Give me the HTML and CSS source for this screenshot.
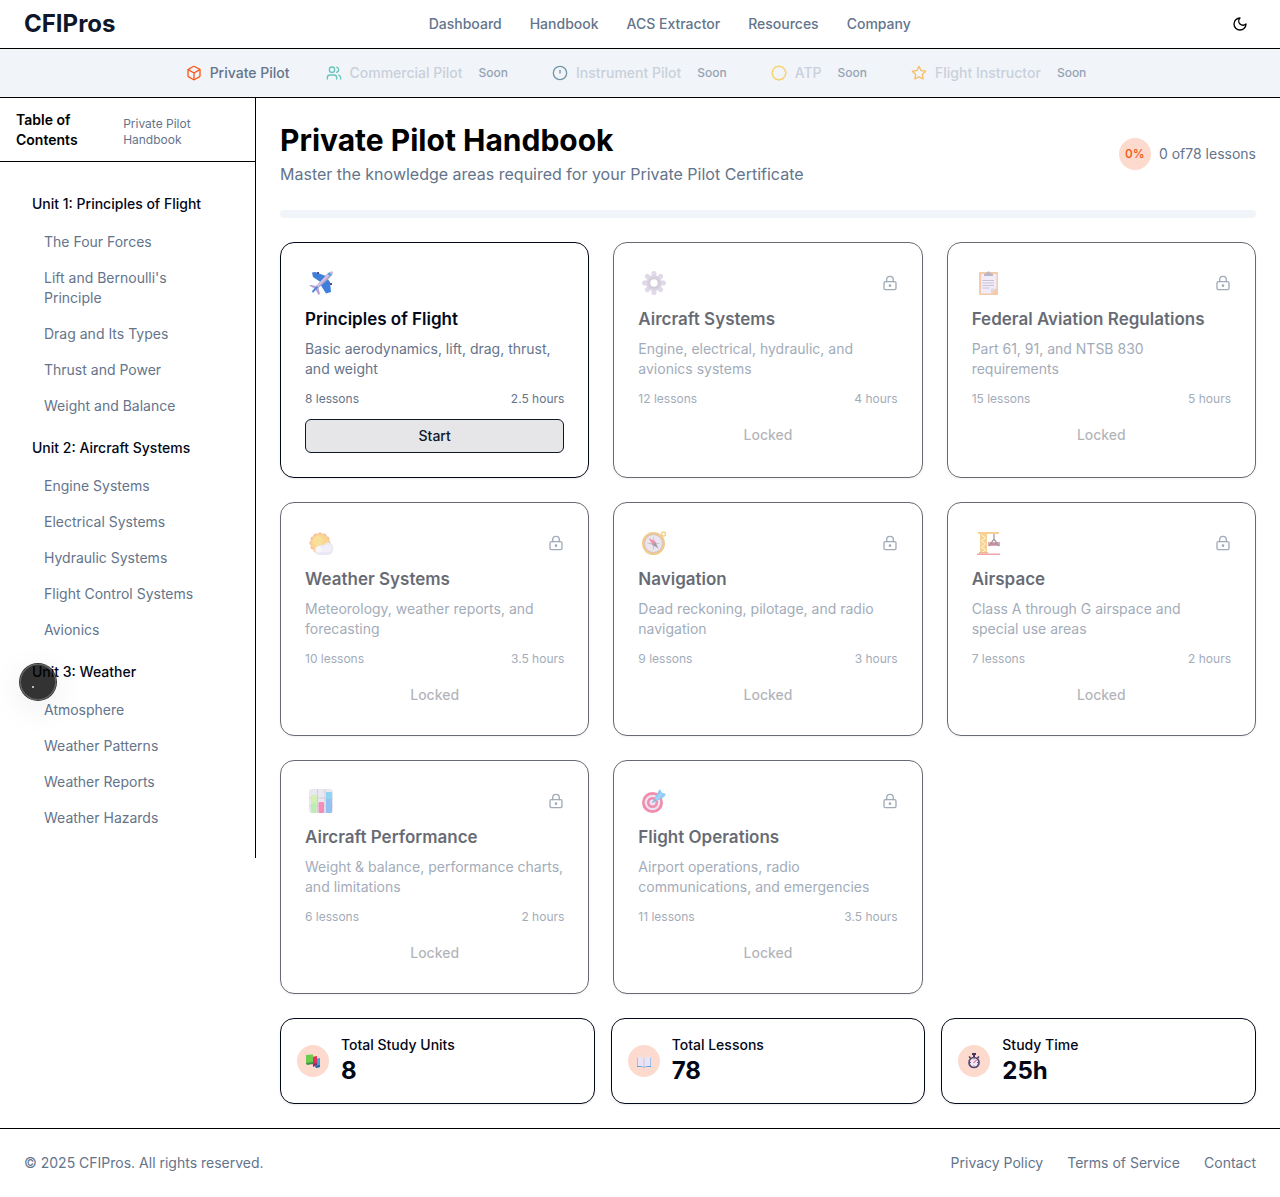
FILE: index.html
```html
<!DOCTYPE html>
<html lang="en">
<head>
<meta charset="utf-8">
<meta name="viewport" content="width=device-width, initial-scale=1">
<title>Private Pilot Handbook - CFIPros</title>
<link rel="stylesheet" href="styles.css">
</head>
<body>
<svg class="sprite" aria-hidden="true">
  <symbol id="lock" viewBox="0 0 24 24"><circle cx="12" cy="16" r="1"/><rect x="3" y="10" width="18" height="12" rx="2"/><path d="M7 10V7a5 5 0 0 1 10 0v3"/></symbol>
</svg>

<header class="topbar">
  <a class="brand" href="#">CFIPros</a>
  <nav class="main-nav" aria-label="Main">
    <a href="#">Dashboard</a>
    <a href="#">Handbook</a>
    <a href="#">ACS Extractor</a>
    <a href="#">Resources</a>
    <a href="#">Company</a>
  </nav>
  <button class="theme-toggle" type="button" aria-label="Toggle theme">
    <svg class="icon" viewBox="0 0 24 24"><path d="M12 3a6 6 0 0 0 9 9 9 9 0 1 1-9-9Z"/></svg>
  </button>
</header>

<nav class="tracks" aria-label="Certificates">
  <a class="track active" href="#">
    <svg class="icon orange" viewBox="0 0 24 24"><path d="M21 16V8a2 2 0 0 0-1-1.73l-7-4a2 2 0 0 0-2 0l-7 4A2 2 0 0 0 3 8v8a2 2 0 0 0 1 1.73l7 4a2 2 0 0 0 2 0l7-4A2 2 0 0 0 21 16z"/><path d="M3.3 7 12 12l8.7-5M12 22V12"/></svg>
    <span>Private Pilot</span>
  </a>
  <a class="track" href="#">
    <svg class="icon teal" viewBox="0 0 24 24"><path d="M16 21v-2a4 4 0 0 0-4-4H6a4 4 0 0 0-4 4v2"/><circle cx="9" cy="7" r="4"/><path d="M22 21v-2a4 4 0 0 0-3-3.87M16 3.13a4 4 0 0 1 0 7.75"/></svg>
    <span>Commercial Pilot</span><span class="soon">Soon</span>
  </a>
  <a class="track" href="#">
    <svg class="icon slate" viewBox="0 0 24 24"><circle cx="12" cy="12" r="10"/><path d="M12 8v4"/></svg>
    <span>Instrument Pilot</span><span class="soon">Soon</span>
  </a>
  <a class="track" href="#">
    <svg class="icon yellow" viewBox="0 0 24 24"><path d="M20.980 14.410A2.600 2.600 0 0 1 18.580 18.580 2.600 2.600 0 0 1 14.410 20.980 2.600 2.600 0 0 1 9.590 20.980 2.600 2.600 0 0 1 5.420 18.580 2.600 2.600 0 0 1 3.020 14.410 2.600 2.600 0 0 1 3.020 9.590 2.600 2.600 0 0 1 5.420 5.420 2.600 2.600 0 0 1 9.590 3.020 2.600 2.600 0 0 1 14.410 3.020 2.600 2.600 0 0 1 18.580 5.420 2.600 2.600 0 0 1 20.980 9.590 2.600 2.600 0 0 1 20.980 14.410Z"/></svg>
    <span>ATP</span><span class="soon">Soon</span>
  </a>
  <a class="track" href="#">
    <svg class="icon amber" viewBox="0 0 24 24"><path d="m12 2 3.09 6.26L22 9.27l-5 4.87 1.18 6.88L12 17.77l-6.18 3.25L7 14.14 2 9.27l6.91-1.01L12 2z"/></svg>
    <span>Flight Instructor</span><span class="soon">Soon</span>
  </a>
</nav>

<div class="layout">
  <aside class="sidebar">
    <div class="sidebar-head">
      <h2>Table of Contents</h2>
      <a href="#">Private Pilot Handbook</a>
    </div>
    <nav class="toc" aria-label="Table of contents">
      <section>
        <h3>Unit 1: Principles of Flight</h3>
        <ul>
          <li><a href="#">The Four Forces</a></li>
          <li><a href="#">Lift and Bernoulli's Principle</a></li>
          <li><a href="#">Drag and Its Types</a></li>
          <li><a href="#">Thrust and Power</a></li>
          <li><a href="#">Weight and Balance</a></li>
        </ul>
      </section>
      <section>
        <h3>Unit 2: Aircraft Systems</h3>
        <ul>
          <li><a href="#">Engine Systems</a></li>
          <li><a href="#">Electrical Systems</a></li>
          <li><a href="#">Hydraulic Systems</a></li>
          <li><a href="#">Flight Control Systems</a></li>
          <li><a href="#">Avionics</a></li>
        </ul>
      </section>
      <section>
        <h3>Unit 3: Weather</h3>
        <ul>
          <li><a href="#">Atmosphere</a></li>
          <li><a href="#">Weather Patterns</a></li>
          <li><a href="#">Weather Reports</a></li>
          <li><a href="#">Weather Hazards</a></li>
        </ul>
      </section>
    </nav>
  </aside>

  <main class="content">
    <div class="page-head">
      <div>
        <h1>Private Pilot Handbook</h1>
        <p>Master the knowledge areas required for your Private Pilot Certificate</p>
      </div>
      <div class="progress-note"><span class="bubble percent">0%</span><span>0 of78 lessons</span></div>
    </div>
    <div class="progress" role="progressbar" aria-label="Lessons completed" aria-valuenow="0" aria-valuemin="0" aria-valuemax="78"></div>

    <div class="units">
      <article class="card">
        <div class="card-top">
          <svg class="emoji" viewBox="0 0 24 24"><path fill="#3f7fdc" d="M3 1.500 6 1l11 4-4 7-9-6zM18 7l-7 6 6 9.500 5-1.500-1-10z"/><path fill="#5a4c79" d="M8 1h2v2H8zM21 12h2v2h-2z"/><path fill="#b5a3cf" d="M0 14.500 2 14l5 1L17.500 3.500C20 1 22 0 23.500.500c.8 2-.5 4-3 6.500L9.500 17l1.500 6-1.500 1L7 19.500 4.500 17z"/><path fill="#d3c5e4" d="M7 15.500 18 4c2-2 4-3 5.500-3L8 17z"/><path fill="#3883e6" d="m3 20 5-5 1 1-5 6z"/><path fill="#35a5dc" d="m18.500 3 1.500-1.500L22.500 4 21 5z"/></svg>
        </div>
        <h3>Principles of Flight</h3>
        <p class="desc">Basic aerodynamics, lift, drag, thrust, and weight</p>
        <div class="meta"><span>8 lessons</span><span>2.5 hours</span></div>
        <button class="action start" type="button">Start</button>
      </article>

      <article class="card locked">
        <div class="card-top">
          <svg class="emoji" viewBox="0 0 24 24"><g stroke="#cdc0dd" stroke-width="5" stroke-linecap="round"><path d="M12 2.500v19M2.500 12h19M5.300 5.300l13.400 13.400M18.700 5.300 5.300 18.700"/></g><circle cx="12" cy="12" r="7.500" fill="#c3b6d0"/><circle cx="12" cy="12" r="5.500" fill="#b3a9ba"/><circle cx="12" cy="12" r="3.800" fill="#fff"/></svg>
          <svg class="icon lock"><use href="#lock"/></svg>
        </div>
        <h3>Aircraft Systems</h3>
        <p class="desc">Engine, electrical, hydraulic, and avionics systems</p>
        <div class="meta"><span>12 lessons</span><span>4 hours</span></div>
        <button class="action" type="button" disabled>Locked</button>
      </article>

      <article class="card locked">
        <div class="card-top">
          <svg class="emoji" viewBox="0 0 24 24"><rect x="3" y="1" width="19" height="23" rx="1" fill="#efa873"/><path fill="#e9e0f4" d="M5 3h15.500v14.500L15 22.500H5z"/><path fill="#d0bcc8" d="M20.500 17.500 15 22.500v-5z"/><path fill="#91859b" d="M8 5V3l2.500-1c.5-2 3.500-2 4 0L17 3v2z"/><path d="M6.500 9.500h11.500M6.500 12h11.500M6.500 14.500h11.500M6.500 17h7" stroke="#a69cb8"/></svg>
          <svg class="icon lock"><use href="#lock"/></svg>
        </div>
        <h3>Federal Aviation Regulations</h3>
        <p class="desc">Part 61, 91, and NTSB 830 requirements</p>
        <div class="meta"><span>15 lessons</span><span>5 hours</span></div>
        <button class="action" type="button" disabled>Locked</button>
      </article>

      <article class="card locked">
        <div class="card-top">
          <svg class="emoji" viewBox="0 0 24 24"><path fill="#f5945c" transform="translate(-1 0)" d="M20.980 14.410A2.600 2.600 0 0 1 18.580 18.580 2.600 2.600 0 0 1 14.410 20.980 2.600 2.600 0 0 1 9.590 20.980 2.600 2.600 0 0 1 5.420 18.580 2.600 2.600 0 0 1 3.020 14.410 2.600 2.600 0 0 1 3.020 9.590 2.600 2.600 0 0 1 5.420 5.420 2.600 2.600 0 0 1 9.590 3.020 2.600 2.600 0 0 1 14.410 3.020 2.600 2.600 0 0 1 18.580 5.420 2.600 2.600 0 0 1 20.980 9.590 2.600 2.600 0 0 1 20.980 14.410Z"/><circle cx="11" cy="12" r="9" fill="#f5be48"/><circle cx="9" cy="10" r="5" fill="#f8ca58"/><path fill="#dedaec" d="M10 24a4.500 4.500 0 0 1-.5-8.900 4 4 0 0 1 5-.8 5 5 0 0 1 9.500 2.500c.5 4.500-1.500 7.200-5 7.200z"/><circle cx="10" cy="18.500" r="3.200" fill="#f2f1f7"/><path fill="#e9e6f2" d="M13 21a5 5 0 1 1 10-4q0 4-4 4z"/></svg>
          <svg class="icon lock"><use href="#lock"/></svg>
        </div>
        <h3>Weather Systems</h3>
        <p class="desc">Meteorology, weather reports, and forecasting</p>
        <div class="meta"><span>10 lessons</span><span>3.5 hours</span></div>
        <button class="action" type="button" disabled>Locked</button>
      </article>

      <article class="card locked">
        <div class="card-top">
          <svg class="emoji" viewBox="0 0 24 24"><circle cx="21.500" cy="3" r="2" fill="none" stroke="#efb442" stroke-width="1.500"/><circle cx="11.500" cy="12.500" r="10.300" fill="#ded3e8" stroke="#eba83d" stroke-width="2.400"/><circle cx="11.500" cy="12.500" r="9" fill="none" stroke="#b59a95"/><path fill="#a49caf" d="m11.500 5 1 6.500 6.500 1-6.500 1-1 6.500-1-6.500-6.500-1 6.500-1z"/><path fill="#625b6e" d="m10 13.500 3-3 3.500 7z"/><path fill="#ef476a" d="m6.500 7 7 3.500-3 3z"/><circle cx="11.500" cy="12.500" r="1" fill="#777"/></svg>
          <svg class="icon lock"><use href="#lock"/></svg>
        </div>
        <h3>Navigation</h3>
        <p class="desc">Dead reckoning, pilotage, and radio navigation</p>
        <div class="meta"><span>9 lessons</span><span>3 hours</span></div>
        <button class="action" type="button" disabled>Locked</button>
      </article>

      <article class="card locked">
        <div class="card-top">
          <svg class="emoji" viewBox="0 0 24 24"><path fill="#efb04e" d="M2 1h21v2H2z"/><path fill="#f0b552" d="M4 3h7v19H4z"/><path d="m5.500 4 4 3-4 3 4 3-4 3 4 3-4 3" fill="none" stroke="#fff0c2"/><path fill="#ed6474" d="M12 11h12v4H12zM1 22.500h23V24H1z"/><path d="M18 3v5m-5 7 5-7 5 7m-8-2h6" fill="none" stroke="#625467" stroke-width="1.300"/><path fill="#e78348" d="M3 21h9v1.500H3z"/></svg>
          <svg class="icon lock"><use href="#lock"/></svg>
        </div>
        <h3>Airspace</h3>
        <p class="desc">Class A through G airspace and special use areas</p>
        <div class="meta"><span>7 lessons</span><span>2 hours</span></div>
        <button class="action" type="button" disabled>Locked</button>
      </article>

      <article class="card locked">
        <div class="card-top">
          <svg class="emoji" viewBox="0 0 24 24"><rect width="24" height="24" rx="3" fill="#dcd8e6"/><path d="M0 9h24M0 17h24M8.500 0v24M16 0v24" stroke="#b8b0c8"/><rect x="2" y="6" width="5.500" height="18" rx="1" fill="#8ee47d"/><path fill="#b8ea74" d="M2 7q0-1 1-1h3.500q1 0 1 1v7H2z"/><rect x="9.500" y="13" width="5.500" height="11" rx="1" fill="#ed4288"/><rect x="17" y="3" width="6" height="21" rx="1" fill="#4c99e8"/><path fill="#48b9ed" d="M17 5q0-2 1-2h4q1 0 1 2v5h-6z"/></svg>
          <svg class="icon lock"><use href="#lock"/></svg>
        </div>
        <h3>Aircraft Performance</h3>
        <p class="desc">Weight &amp; balance, performance charts, and limitations</p>
        <div class="meta"><span>6 lessons</span><span>2 hours</span></div>
        <button class="action" type="button" disabled>Locked</button>
      </article>

      <article class="card locked">
        <div class="card-top">
          <svg class="emoji" viewBox="0 0 24 24"><circle cx="10.500" cy="13.500" r="10.500" fill="#e84177"/><circle cx="10.500" cy="13.500" r="7.800" fill="#dfd1ea"/><circle cx="10.500" cy="13.500" r="5.500" fill="#e84177"/><circle cx="10.500" cy="13.500" r="3" fill="#dfd1ea"/><path d="m10.500 13.500 9-9" stroke="#377ec2" stroke-width="1.500"/><path fill="#4aa8ed" d="m12.500 9 4-7 1.500-2 1.700 3.500L24 5l-2 3-7.500 4z"/><path d="m14 10.500 6-6" stroke="#8bd9fa"/></svg>
          <svg class="icon lock"><use href="#lock"/></svg>
        </div>
        <h3>Flight Operations</h3>
        <p class="desc">Airport operations, radio communications, and emergencies</p>
        <div class="meta"><span>11 lessons</span><span>3.5 hours</span></div>
        <button class="action" type="button" disabled>Locked</button>
      </article>
    </div>

    <div class="stats">
      <div class="stat">
        <span class="bubble"><svg class="mini" viewBox="0 0 16 16"><path fill="#3ba5d8" d="m9 6 6-1v9l-4 1z"/><path fill="#2863a6" d="m10 13 5-1v2l-4 1z"/><path fill="#e62d5b" d="m7 4 5-1v8l-4 2z"/><path fill="#8b2d75" d="m8 11 4-1v2l-4 2z"/><path fill="#6ccb4c" d="m1 2 7-.500V10l-7 1z"/><path fill="#3e914d" d="m1 10 7-1v2l-6 1z"/></svg></span>
        <div><h3>Total Study Units</h3><p>8</p></div>
      </div>
      <div class="stat">
        <span class="bubble"><svg class="mini" viewBox="0 0 16 16"><path fill="#4ba0dd" d="M1 5h14v9H9l-1 1-1-1H1z"/><path fill="#eae3f5" d="M1.500 4q4.500-1 6.500 1 2-2 6.500-1v9q-4.500 0-6.500 1-2-1-6.500-1z"/><path d="M8 5v9" stroke="#bdb4d4" stroke-width=".7"/></svg></span>
        <div><h3>Total Lessons</h3><p>78</p></div>
      </div>
      <div class="stat">
        <span class="bubble"><svg class="mini" viewBox="0 0 16 16"><path fill="#49365e" d="M6 0h4v2H9v2H7V2H6zM2.500 4l1-1L5 4.500l-1 1zM13.500 4l-1-1L11 4.500l1 1z"/><circle cx="8" cy="9.500" r="5" fill="#eee7f5" stroke="#594670" stroke-width="1.700"/><path d="M8 5.500v1M8 12.500v1M4 9.500h1M11 9.500h1" stroke="#695c79"/><path d="m7.500 10 3-3" stroke="#e93766"/></svg></span>
        <div><h3>Study Time</h3><p>25h</p></div>
      </div>
    </div>
  </main>
</div>

<footer class="footer">
  <p>© 2025 CFIPros. All rights reserved.</p>
  <nav aria-label="Footer">
    <a href="#">Privacy Policy</a>
    <a href="#">Terms of Service</a>
    <a href="#">Contact</a>
  </nav>
</footer>

<button class="floating" type="button" aria-label="Open tools"></button>
</body>
</html>
```
FILE: styles.css
```css
:root {
  --ink: #020817;
  --muted: #64748b;
  --surface: #f1f5f9;
  --orange: #f2560d;
  --peach: #fcdacd;
}
* { box-sizing: border-box; }
body {
  margin: 0;
  background: #fff;
  color: var(--ink);
  font-family: Inter, "Liberation Sans", sans-serif;
  font-size: 14px;
  line-height: 20px;
}
h1, h2, h3, p, ul { margin: 0; padding: 0; }
ul { list-style: none; }
a { color: inherit; text-decoration: none; }
button { font: inherit; color: inherit; cursor: pointer; }
button:disabled { cursor: default; }
svg { display: block; flex-shrink: 0; }
.sprite { position: absolute; width: 0; height: 0; }
.icon {
  width: 16px;
  height: 16px;
  fill: none;
  stroke: currentColor;
  stroke-width: 2;
  stroke-linecap: round;
  stroke-linejoin: round;
}

.topbar {
  display: flex;
  align-items: center;
  justify-content: space-between;
  min-height: 49px;
  padding: 0 24px;
  border-bottom: 1px solid #000;
}
.brand {
  color: #0f172a;
  font-size: 24px;
  line-height: 32px;
  font-weight: 700;
}
.main-nav { display: flex; gap: 28px; color: var(--muted); font-weight: 500; }
.theme-toggle {
  display: flex;
  align-items: center;
  justify-content: center;
  width: 32px;
  height: 32px;
  padding: 0;
  border: 0;
  background: none;
  color: #000;
}

.tracks {
  display: flex;
  justify-content: center;
  gap: 36px;
  min-height: 49px;
  padding: 14px 24px;
  border-bottom: 1px solid #000;
  background: var(--surface);
  font-weight: 500;
}
.track { display: flex; align-items: center; gap: 8px; color: #c9d0da; }
.track.active { color: var(--muted); }
.soon { padding: 0 8px; color: #96a2b3; font-size: 12px; line-height: 16px; }
.orange { color: #f95a1c; }
.teal { color: #6cc3ba; }
.slate { color: #7196a5; }
.yellow { color: #f8d16f; }
.amber { color: #f8bd6b; }

.layout { display: flex; align-items: flex-start; }
.sidebar { flex: 0 0 256px; border-right: 1px solid #000; }
.sidebar-head {
  display: flex;
  align-items: center;
  justify-content: space-between;
  padding: 12px 16px 11px;
  border-bottom: 1px solid #000;
}
.sidebar-head h2 { color: #000; font-size: 14px; line-height: 20px; font-weight: 600; }
.sidebar-head a { padding-top: 4px; color: var(--muted); font-size: 12px; line-height: 16px; }
.toc { display: grid; gap: 4px; padding: 22px 32px; }
.toc h3 { padding: 10px 0; font-size: 14px; line-height: 20px; font-weight: 500; }
.toc li a { display: block; padding: 8px 12px; color: var(--muted); }

.content { flex: 1; min-width: 0; padding: 24px; }
.page-head { display: flex; align-items: center; justify-content: space-between; }
.page-head h1 { margin-bottom: 4px; color: #000; font-size: 30px; line-height: 36px; font-weight: 700; }
.page-head p { color: var(--muted); font-size: 16px; line-height: 24px; }
.progress-note { display: flex; align-items: center; gap: 8px; color: var(--muted); }
.bubble {
  display: flex;
  align-items: center;
  justify-content: center;
  flex: 0 0 32px;
  height: 32px;
  border-radius: 50%;
  background: var(--peach);
}
.percent { color: var(--orange); font-size: 12px; font-weight: 500; }
.progress { height: 8px; margin: 24px 0; border-radius: 4px; background: var(--surface); }

.units { display: grid; grid-template-columns: repeat(3, 1fr); gap: 24px; }
.card, .stat {
  border: 1px solid var(--ink);
  border-radius: 14px;
  background: #fff;
  box-shadow: 0 1px 2px rgba(0, 0, 0, .08);
}
.card { display: flex; flex-direction: column; padding: 24px; }
.card.locked { opacity: .6; }
.card-top {
  display: flex;
  align-items: center;
  justify-content: space-between;
  min-height: 32px;
}
.emoji { width: 24px; height: 24px; margin: 0 4px; }
.lock { color: var(--muted); }
.card h3 { margin: 6px 0; font-size: 17px; line-height: 28px; font-weight: 600; }
.desc { color: var(--muted); }
.meta {
  display: flex;
  justify-content: space-between;
  margin: 12px 0;
  color: var(--muted);
  font-size: 12px;
  line-height: 16px;
}
.action { padding: 6px 12px; border: 0; border-radius: 6px; background: none; font-weight: 500; }
.action:disabled { color: inherit; opacity: .5; }
.start { border: 1px solid #0f172a; background: #e6e6e8; color: #0f172a; }

.stats { display: grid; grid-template-columns: repeat(3, 1fr); gap: 16px; margin-top: 24px; }
.stat { display: flex; align-items: center; gap: 12px; padding: 16px; }
.stat h3 { font-size: 14px; line-height: 20px; font-weight: 500; }
.stat p { font-size: 24px; line-height: 32px; font-weight: 700; }
.mini { width: 16px; height: 16px; }

.footer {
  display: flex;
  align-items: center;
  justify-content: space-between;
  padding: 24px;
  border-top: 1px solid #000;
  color: var(--muted);
}
.footer nav { display: flex; gap: 24px; }

.floating {
  position: fixed;
  left: 19px;
  top: 663px;
  width: 38px;
  height: 38px;
  padding: 0;
  border: 1px solid rgba(0, 0, 0, .8);
  border-radius: 50%;
  background: radial-gradient(circle at 13px 23px, #bbb 1px, transparent 1px), rgba(0, 0, 0, .8);
  background-clip: padding-box;
  box-shadow: inset 0 0 0 1px rgba(255, 255, 255, .2), 0 8px 32px rgba(0, 0, 0, .08);
}
```
